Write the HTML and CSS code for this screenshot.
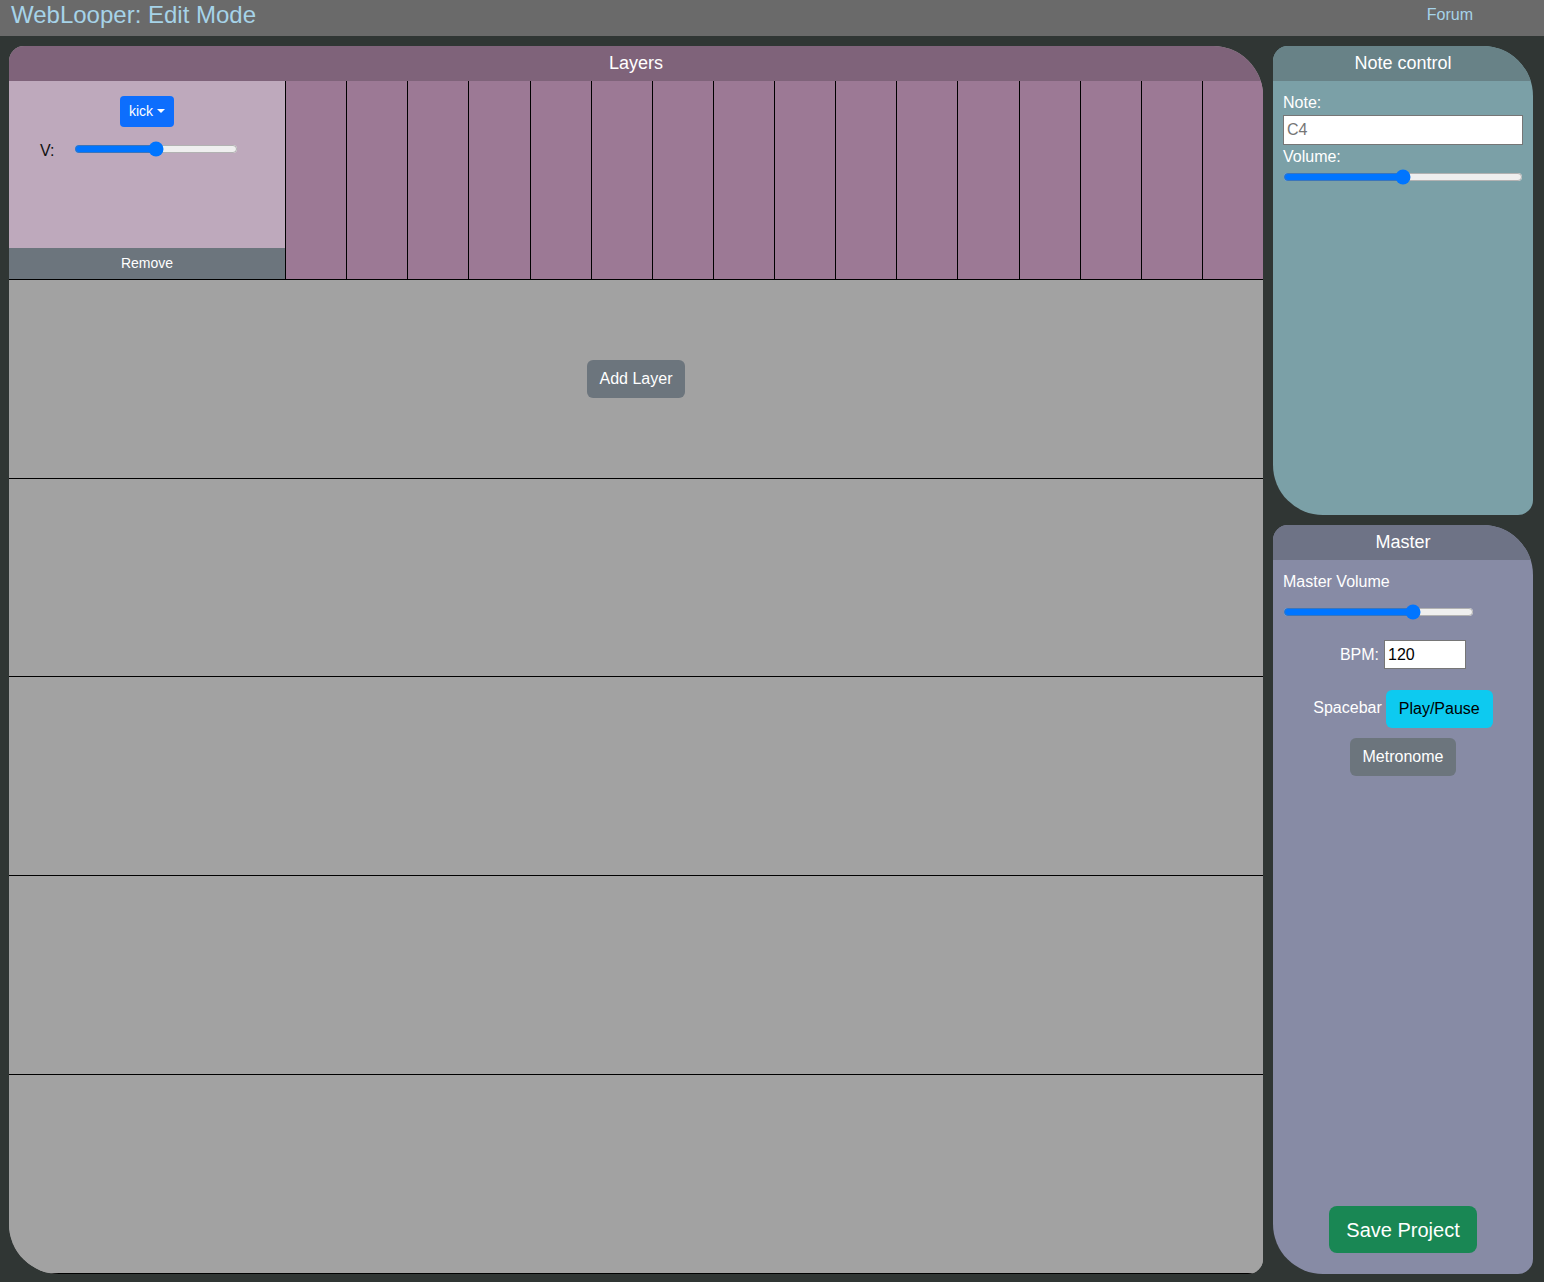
FILE: index.html
```html
<!DOCTYPE html>
<html>
<head>
<meta charset="utf-8">
<title>WebLooper</title>
<link rel="stylesheet" href="styles.css">
</head>
<body>
<header class="topbar">
  <span class="brand">WebLooper: Edit Mode</span>
  <a class="forum" href="#">Forum</a>
</header>
<main class="workspace">
  <section class="layers panel">
    <div class="panel-head layers-head">Layers</div>
    <div class="rows">
      <div class="row layer-row">
        <div class="layer-ctrl">
          <button class="kick-btn">kick <span class="caret"></span></button>
          <div class="vol-line">
            <span class="v-label">V:</span>
            <input class="range kick-range" type="range" min="0" max="100" value="50">
          </div>
          <div class="remove">Remove</div>
        </div>
        <div class="cells">
          <div class="cell"></div><div class="cell"></div><div class="cell"></div><div class="cell"></div>
          <div class="cell"></div><div class="cell"></div><div class="cell"></div><div class="cell"></div>
          <div class="cell"></div><div class="cell"></div><div class="cell"></div><div class="cell"></div>
          <div class="cell"></div><div class="cell"></div><div class="cell"></div><div class="cell"></div>
        </div>
      </div>
      <div class="row empty-row add-row"><button class="btn btn-secondary">Add Layer</button></div>
      <div class="row empty-row"></div>
      <div class="row empty-row"></div>
      <div class="row empty-row"></div>
      <div class="row empty-row"></div>
    </div>
  </section>
  <aside class="side">
    <section class="panel note-panel">
      <div class="panel-head note-head">Note control</div>
      <div class="panel-body">
        <div class="lbl">Note:</div>
        <input class="text-in note-in" type="text" placeholder="C4">
        <div class="lbl">Volume:</div>
        <input class="range note-range" type="range" min="0" max="100" value="50">
      </div>
    </section>
    <section class="panel master-panel">
      <div class="panel-head master-head">Master</div>
      <div class="panel-body master-body">
        <div class="lbl">Master Volume</div>
        <input class="range master-range" type="range" min="0" max="100" value="70">
        <div class="center-line bpm-line">
          <span>BPM:</span>
          <input class="text-in bpm-in" type="text" value="120">
        </div>
        <div class="center-line play-line">
          <span>Spacebar</span>
          <button class="btn btn-info">Play/Pause</button>
        </div>
        <div class="center-line metro-line">
          <button class="btn btn-secondary">Metronome</button>
        </div>
        <div class="center-line save-line">
          <button class="btn btn-success btn-lg">Save Project</button>
        </div>
      </div>
    </section>
  </aside>
</main>
</body>
</html>
```
FILE: styles.css
```css
* { box-sizing: border-box; }
html, body { margin: 0; padding: 0; }
body {
  background: #303634;
  font-family: "Liberation Sans", Arial, sans-serif;
  font-size: 16px;
  color: #fff;
  width: 1544px;
  height: 1282px;
  overflow: hidden;
}
.topbar {
  height: 36px;
  background: #6a6a6a;
  display: flex;
  align-items: flex-start;
  justify-content: space-between;
  padding: 0 71px 0 11px;
}
.brand {
  font-size: 24px;
  line-height: 30px;
  color: #a6d3e8;
}
.forum {
  font-size: 16px;
  line-height: 30px;
  color: #a6d3e8;
  text-decoration: none;
}
.workspace {
  display: flex;
  gap: 10px;
  padding: 10px 11px 0 9px;
  height: 1274px;
}
.panel {
  border-radius: 15px 50px 15px 50px;
  overflow: hidden;
  display: flex;
  flex-direction: column;
}
.panel-head {
  height: 35px;
  flex: 0 0 35px;
  text-align: center;
  font-size: 18px;
  line-height: 34px;
  color: #fff;
}
.layers { width: 1254px; height: 1228px; background: #a2a2a2; }
.layers-head { background: #7f637a; }
.rows { flex: 1; display: flex; flex-direction: column; }
.row {
  flex: 1 1 0;
  border-bottom: 1px solid #000;
  display: flex;
  min-height: 0;
}
.empty-row { background: #a2a2a2; }
.add-row { align-items: center; justify-content: center; }
.layer-ctrl {
  width: 276px;
  flex: 0 0 276px;
  background: #bea9bc;
  display: flex;
  flex-direction: column;
  align-items: center;
  padding-top: 15px;
}
.kick-btn {
  background: #0d6efd;
  color: #fff;
  border: 0;
  border-radius: 4px;
  font-family: inherit;
  font-size: 14px;
  line-height: 21px;
  padding: 5px 9px;
  display: flex;
  align-items: center;
  gap: 4px;
}
.caret {
  width: 0; height: 0;
  border-left: 4px solid transparent;
  border-right: 4px solid transparent;
  border-top: 4px solid #fff;
  margin-top: -2px;
}
.vol-line {
  align-self: stretch;
  display: flex;
  align-items: center;
  height: 20px;
  margin-top: 12px;
  padding-left: 31px;
}
.v-label { color: #111; font-size: 16px; width: 34px; margin-top: 4px; }
.range { margin: 0; height: 16px; accent-color: #0075ff; }
.kick-range { width: 164px; }
.remove {
  margin-top: auto;
  align-self: stretch;
  height: 31px;
  background: #6c757d;
  color: #fff;
  text-align: center;
  font-size: 14px;
  line-height: 30px;
}
.cells { flex: 1; display: flex; background: #9c7995; }
.cell { flex: 1 1 0; border-left: 1px solid #000; background: #9c7995; }

.btn {
  border: 0;
  border-radius: 6px;
  font-family: inherit;
  font-size: 16px;
  line-height: 24px;
  padding: 7px 13px;
  color: #fff;
}
.btn-secondary { background: #6c757d; }
.btn-info { background: #0dcaf0; color: #000; }
.btn-success { background: #198754; }
.btn-lg { font-size: 20px; line-height: 30px; padding: 9px 17px 8px; border-radius: 8px; }

.side { width: 260px; display: flex; flex-direction: column; gap: 10px; height: 1228px; }
.note-panel { height: 469px; background: #7ba0a7; }
.note-head { background: #688287; }
.panel-body { padding: 10px; display: flex; flex-direction: column; align-items: flex-start; flex: 1; }
.lbl { font-size: 16px; line-height: 24px; }
.text-in {
  font-family: inherit;
  font-size: 16px;
  border: 1px solid #767676;
  background: #fff;
  color: #000;
  padding: 0 3px;
  outline: none;
}
.text-in::placeholder { color: #757575; }
.note-in { width: 240px; height: 30px; }
.note-range { width: 240px; margin-top: 0; }
.master-panel { flex: 1; background: #878ba5; }
.master-head { background: #6e7386; }
.master-range { width: 191px; margin-top: 10px; }
.center-line {
  align-self: stretch;
  display: flex;
  justify-content: center;
  align-items: center;
}
.bpm-line { margin-top: 20px; gap: 5px; }
.bpm-in { width: 82px; height: 29px; }
.play-line { margin-top: 21px; gap: 4px; }
.play-line span { margin-top: -2px; }
.metro-line { margin-top: 10px; }
.save-line { margin-top: auto; margin-bottom: 11px; }
```
